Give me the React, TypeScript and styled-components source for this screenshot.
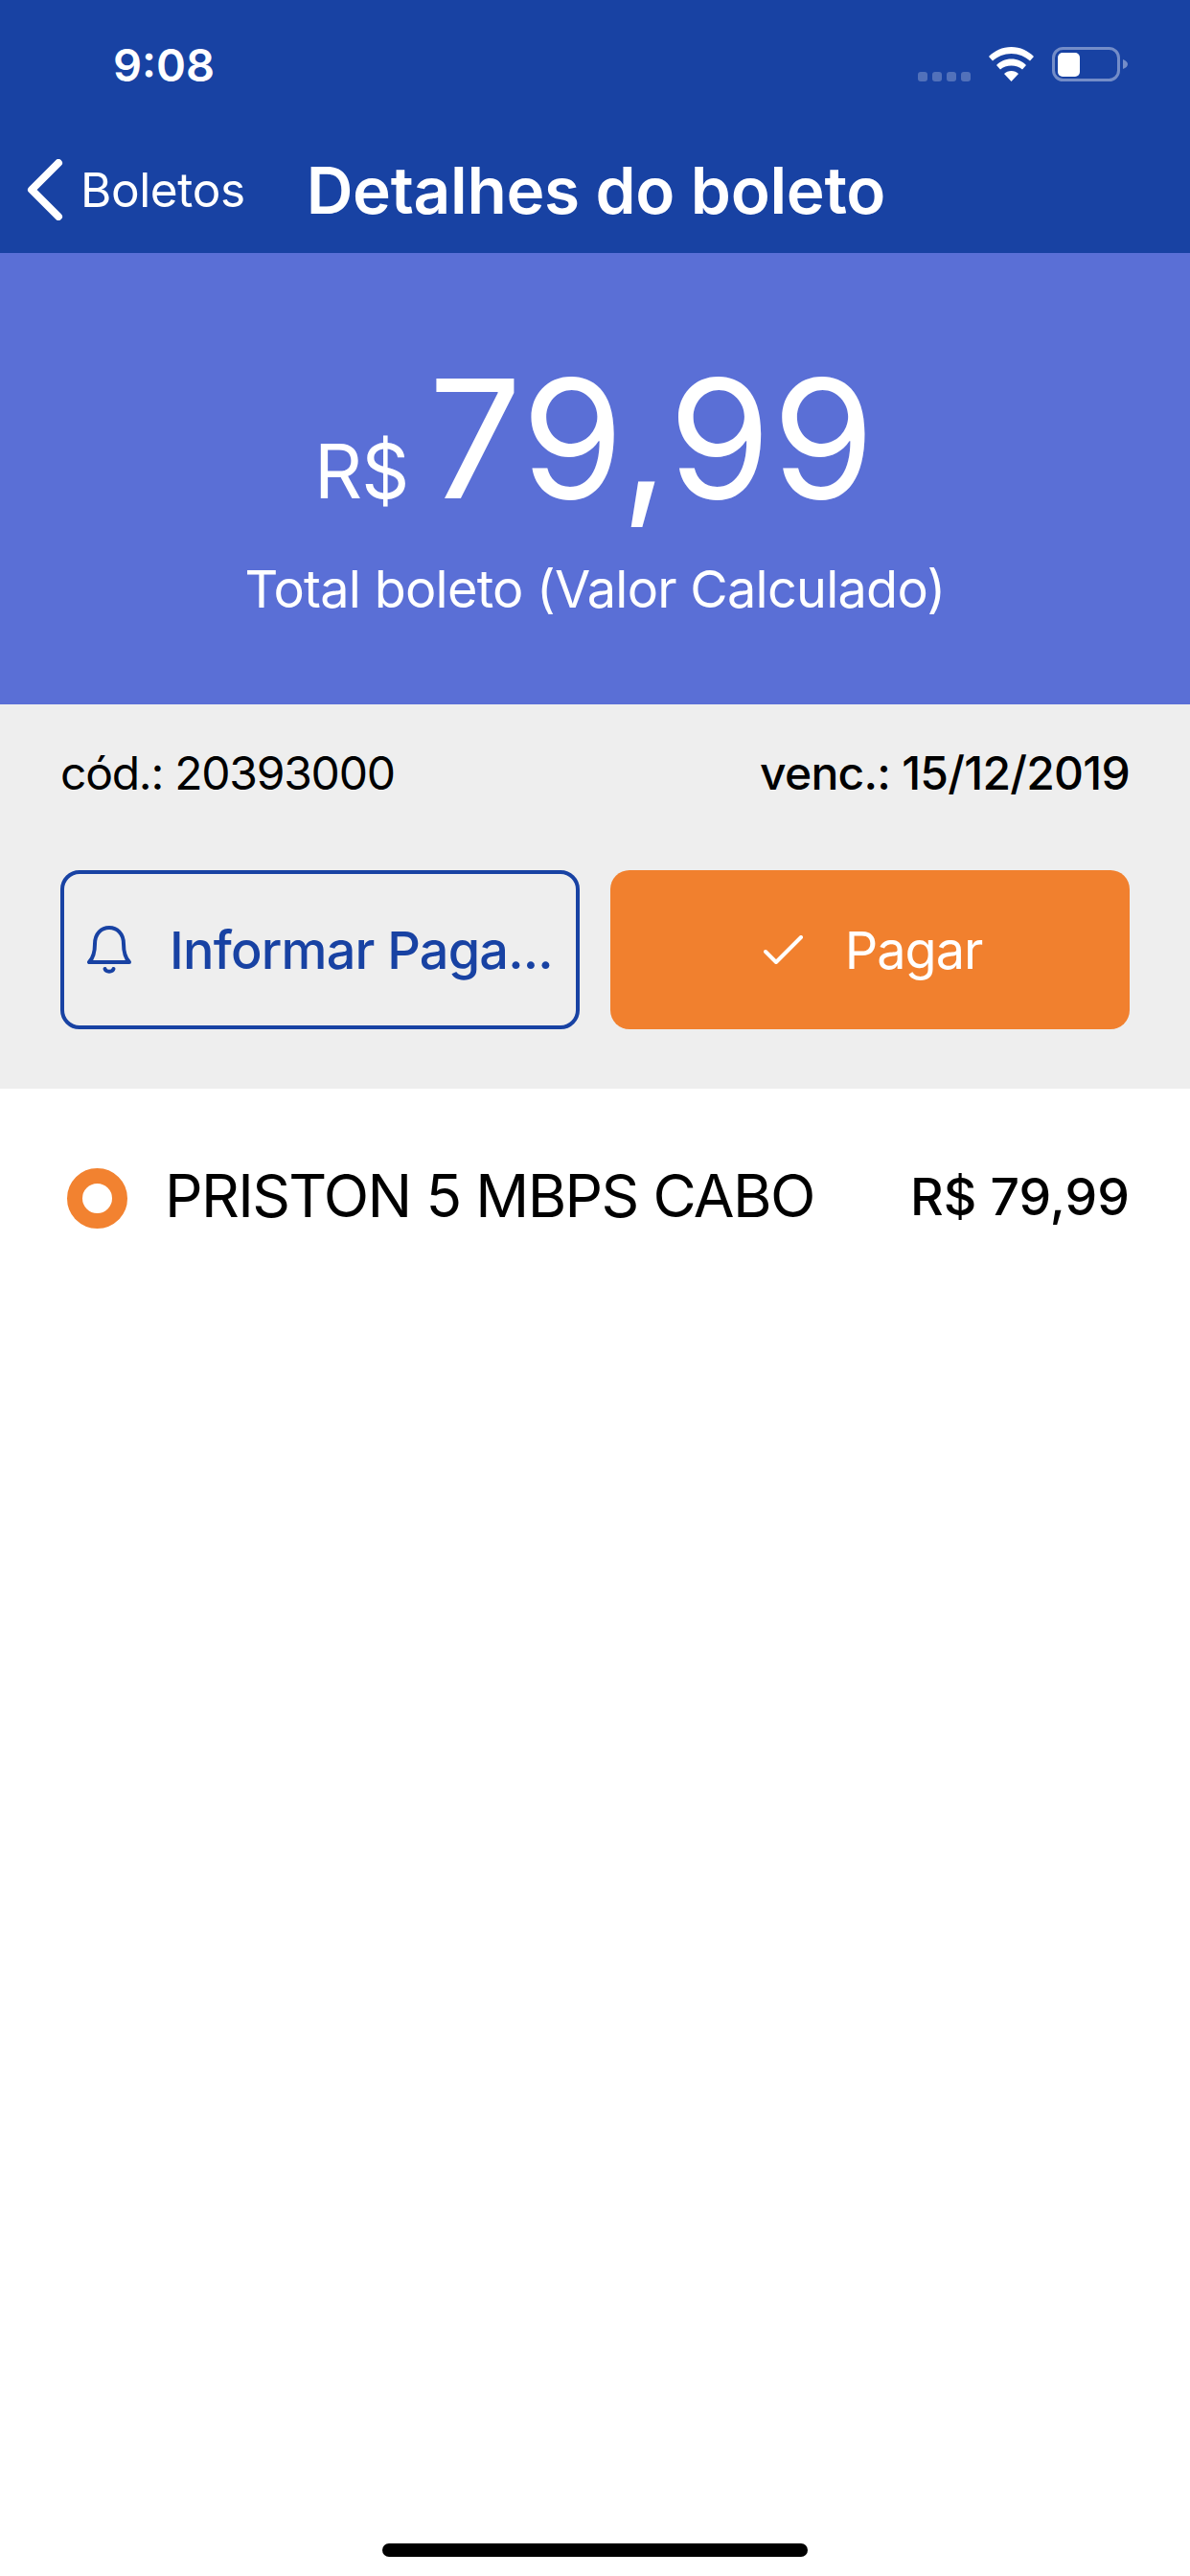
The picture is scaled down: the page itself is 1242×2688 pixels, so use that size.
import React from 'react';
import styled, { createGlobalStyle } from 'styled-components';

const GlobalStyle = createGlobalStyle`
  html, body {
    margin: 0;
    padding: 0;
    background: #ffffff;
  }
  * {
    box-sizing: border-box;
  }
`;

const Page = styled.div`
  width: 1242px;
  height: 2688px;
  display: flex;
  flex-direction: column;
  font-family: 'Inter', 'Liberation Sans', sans-serif;
  background: #ffffff;
  overflow: hidden;
`;

const TopBar = styled.header`
  height: 264px;
  background: #1842a3;
  color: #ffffff;
  display: flex;
  flex-direction: column;
`;

const StatusBar = styled.div`
  height: 132px;
  padding: 37px 62px 0 118px;
  display: flex;
  justify-content: space-between;
  align-items: flex-start;
`;

const Clock = styled.div`
  font-size: 47px;
  line-height: 62px;
  font-weight: 600;
`;

const StatusIcons = styled.div`
  display: flex;
  align-items: flex-start;
  padding-top: 7px;
`;

const NavRow = styled.div`
  height: 132px;
  display: flex;
  align-items: center;
  padding: 0 0 0 28px;
`;

const BackLabel = styled.span`
  font-size: 49.5px;
  margin-left: 18px;
  letter-spacing: -0.4px;
`;

const Title = styled.h1`
  margin: 0 0 0 64px;
  font-size: 67.5px;
  font-weight: 600;
  letter-spacing: -0.3px;
`;

const Hero = styled.section`
  height: 471px;
  background: #5a6fd6;
  color: #ffffff;
  display: flex;
  flex-direction: column;
  align-items: center;
`;

const AmountRow = styled.div`
  margin-top: 128px;
  height: 130px;
  display: flex;
  align-items: baseline;
  justify-content: center;
`;

const Currency = styled.span`
  font-size: 78px;
  line-height: 92px;
  letter-spacing: -1px;
  margin-right: 21px;
`;

const Amount = styled.span`
  font-size: 172px;
  line-height: 130px;
  font-weight: 370;
  letter-spacing: 1.4px;
`;

const HeroCaption = styled.div`
  margin-top: 63px;
  font-size: 54px;
  line-height: 60px;
  letter-spacing: -0.75px;
`;

const Summary = styled.section`
  height: 401px;
  background: #eeeeee;
  padding: 42px 63px 0;
`;

const InfoRow = styled.div`
  display: flex;
  justify-content: space-between;
  font-size: 48px;
  line-height: 60px;
  letter-spacing: -1.25px;
  color: #000000;
`;

const Due = styled.span`
  font-weight: 500;
  letter-spacing: -0.75px;
`;

const Actions = styled.div`
  margin-top: 71px;
  display: grid;
  grid-template-columns: 542px 542px;
  column-gap: 32px;
`;

const ActionButton = styled.button<{ $filled?: boolean }>`
  height: 166px;
  border-radius: 20px;
  font-family: inherit;
  font-size: 54px;
  font-weight: ${props => (props.$filled ? 400 : 500)};
  letter-spacing: ${props => (props.$filled ? '-1px' : '-0.8px')};
  display: flex;
  align-items: center;
  justify-content: center;
  gap: ${props => (props.$filled ? '44px' : '40px')};
  padding: ${props => (props.$filled ? '0 0 0 6px' : '0')};
  color: ${props => (props.$filled ? '#ffffff' : '#1842a3')};
  background: ${props => (props.$filled ? '#f1802e' : 'transparent')};
  border: ${props => (props.$filled ? 'none' : '4px solid #1842a3')};
`;

const ItemRow = styled.div`
  margin-top: 78px;
  padding: 0 63px 0 70px;
  display: flex;
  align-items: center;
  height: 72px;
`;

const Marker = styled.span`
  width: 63px;
  height: 63px;
  border-radius: 50%;
  border: 16px solid #f28230;
  background: #ffffff;
`;

const ItemName = styled.span`
  margin: -5px 0 0 39px;
  font-size: 62px;
  letter-spacing: -1.65px;
  color: #000000;
  flex: 1;
  white-space: nowrap;
`;

const ItemPrice = styled.span`
  font-size: 53.5px;
  font-weight: 500;
  color: #000000;
  margin-top: -4px;
`;

const HomeIndicator = styled.div`
  width: 444px;
  height: 14px;
  margin: auto auto 20px;
  border-radius: 7px;
  background: #000000;
`;

const StatusGlyphs = () => (
  <svg width="222" height="50" viewBox="0 0 222 50">
    <g fill="#ffffff" fillOpacity="0.25">
      <rect x="0" y="31" width="10" height="10" rx="3" />
      <rect x="15" y="31" width="10" height="10" rx="3" />
      <rect x="30" y="31" width="10" height="10" rx="3" />
      <rect x="45" y="31" width="10" height="10" rx="3" />
    </g>
    <g fill="#ffffff">
      <path d="M74 15C80 9 88 5 97.5 5S115 9 121 15L117 19.5C112 15 105 12 97.5 12S83 15 78 19.5Z" />
      <path d="M82 24C86 20 91 17.5 97.5 17.5S109 20 113 24L109 28.5C106 26 102 24.5 97.5 24.5S89 26 86 28.5Z" />
      <path d="M90 33C92 31 94.5 30 97.5 30S103 31 105 33L97.5 41Z" />
    </g>
    <rect x="141.5" y="6.5" width="68" height="33" rx="10" fill="none" stroke="#ffffff" strokeOpacity="0.4" strokeWidth="3" />
    <rect x="146" y="11" width="23" height="25" rx="5" fill="#ffffff" />
    <path d="M214 18c3 1 5 3 5 5s-2 4-5 5z" fill="#ffffff" fillOpacity="0.4" />
  </svg>
);

const BackChevron = () => (
  <svg width="38" height="64" viewBox="0 0 38 64" fill="none" stroke="#ffffff" strokeWidth="8" strokeLinecap="round" strokeLinejoin="round">
    <path d="M33 4 5 32l28 28" />
  </svg>
);

const BellIcon = () => (
  <svg width="46" height="50" viewBox="0 0 46 50" fill="none" stroke="#1842a3" strokeWidth="4" strokeLinecap="round" strokeLinejoin="round">
    <path d="M2 38h42c-4-4-6-10-6-19C38 8 31 2 23 2S8 8 8 19c0 9-2 15-6 19z" />
    <path d="M18.5 45c1 3.5 8 3.5 9 0" />
  </svg>
);

const CheckIcon = () => (
  <svg width="41" height="30" viewBox="0 0 41 30" fill="none" stroke="#ffffff" strokeWidth="4" strokeLinecap="round" strokeLinejoin="round">
    <path d="M2 17l11 11L39 2" />
  </svg>
);

export default function App() {
  return (
    <>
      <GlobalStyle />
      <Page>
        <TopBar>
          <StatusBar>
            <Clock>9:08</Clock>
            <StatusIcons>
              <StatusGlyphs />
            </StatusIcons>
          </StatusBar>
          <NavRow>
            <BackChevron />
            <BackLabel>Boletos</BackLabel>
            <Title>Detalhes do boleto</Title>
          </NavRow>
        </TopBar>
        <Hero>
          <AmountRow>
            <Currency>R$</Currency>
            <Amount>79,99</Amount>
          </AmountRow>
          <HeroCaption>Total boleto (Valor Calculado)</HeroCaption>
        </Hero>
        <Summary>
          <InfoRow>
            <span>cód.: 20393000</span>
            <Due>venc.: 15/12/2019</Due>
          </InfoRow>
          <Actions>
            <ActionButton>
              <BellIcon />
              Informar Paga...
            </ActionButton>
            <ActionButton $filled>
              <CheckIcon />
              Pagar
            </ActionButton>
          </Actions>
        </Summary>
        <ItemRow>
          <Marker />
          <ItemName>PRISTON 5 MBPS CABO</ItemName>
          <ItemPrice>R$ 79,99</ItemPrice>
        </ItemRow>
        <HomeIndicator />
      </Page>
    </>
  );
}
